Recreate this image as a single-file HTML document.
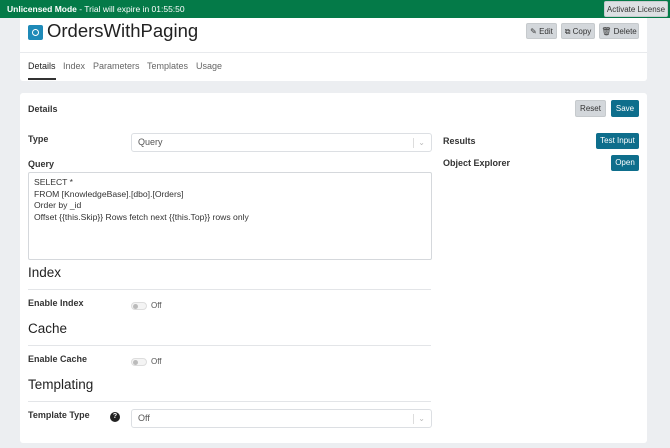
<html><head><style>
body{margin:0;width:670px;height:448px;background:#eceef1;font-family:"Liberation Sans",sans-serif;position:relative;overflow:hidden;color:#222}
div,span{position:absolute;box-sizing:border-box}
.b{font-weight:bold;font-size:9px;color:#333}
.btn{border-radius:2px;font-size:8px;text-align:center;line-height:16px;height:16px}
.g{background:#d3d7db;color:#333;border:1px solid #c6cacd}
.t{background:#0e6e8c;color:#fff}
.h{font-size:13.5px;color:#222}
.ln{height:1px;background:#e3e5e8;left:28px;width:403px}
.sel{border:1px solid #dcdfe3;border-radius:3px;background:#fff;height:19px;font-size:9px;color:#555;line-height:17px;padding-left:6px}
.sel:after{content:"";position:absolute;right:17px;top:4px;width:1px;height:10px;background:#ddd}
.tg{width:16px;height:8px;border:1px solid #ddd;border-radius:5px;background:#f4f4f4}
.tg:before{content:"";position:absolute;left:1px;top:1px;width:5px;height:5px;border-radius:50%;background:#bbb}
.tab{top:61px;font-size:9px;color:#666;white-space:nowrap}
</style></head><body>
<div style="left:0;top:0;width:670px;height:18px;background:#047a48;color:#fff;font-size:8.5px;line-height:18px;padding-left:7px"><b>Unlicensed Mode</b> - Trial will expire in 01:55:50</div>
<div class="btn g" style="left:604px;top:1px;width:64px;height:16px;background:#dde0e3">Activate License</div>
<div style="left:20px;top:18px;width:627px;height:63px;background:#fff;border-radius:0 0 3px 3px"></div>
<div style="left:20px;top:52px;width:627px;height:1px;background:#e8eaed"></div>
<div style="left:28px;top:25px;width:15px;height:15px;background:#1e8ab8;border-radius:2px"><span style="left:4px;top:4px;width:7px;height:7px;border:1.5px solid #fff;border-radius:50%"></span></div>
<div style="left:47px;top:20px;font-size:18.5px;color:#222;white-space:nowrap">OrdersWithPaging</div>
<div class="btn g" style="left:526px;top:23px;width:31px">✎ Edit</div>
<div class="btn g" style="left:561px;top:23px;width:34px">⧉ Copy</div>
<div class="btn g" style="left:599px;top:23px;width:40px">🗑 Delete</div>
<div class="tab" style="left:28px;color:#222">Details</div>
<div style="left:28px;top:78px;width:28px;height:2px;background:#333"></div>
<div class="tab" style="left:63px">Index</div>
<div class="tab" style="left:93px">Parameters</div>
<div class="tab" style="left:147px">Templates</div>
<div class="tab" style="left:196px">Usage</div>
<div style="left:20px;top:93px;width:627px;height:350px;background:#fff;border-radius:3px"></div>
<div class="b" style="left:28px;top:104px">Details</div>
<div class="btn g" style="left:575px;top:100px;width:31px;height:17px;line-height:15px">Reset</div>
<div class="btn t" style="left:611px;top:100px;width:28px;height:17px;line-height:17px">Save</div>
<div class="b" style="left:28px;top:134px">Type</div>
<div class="sel" style="left:131px;top:133px;width:301px">Query<span style="right:6px;top:0;color:#bbb;font-size:8px">⌄</span></div>
<div class="b" style="left:28px;top:159px">Query</div>
<div style="left:28px;top:172px;width:404px;height:88px;border:1px solid #d5d8dc;border-radius:2px;font-size:8.6px;line-height:11.7px;padding:4px 5px;color:#333;white-space:nowrap">SELECT *<br>FROM [KnowledgeBase].[dbo].[Orders]<br>Order by _id<br>Offset {{this.Skip}} Rows fetch next {{this.Top}} rows only</div>
<div class="b" style="left:443px;top:136px">Results</div>
<div class="btn t" style="left:596px;top:133px;width:43px">Test Input</div>
<div class="b" style="left:443px;top:158px">Object Explorer</div>
<div class="btn t" style="left:611px;top:155px;width:28px">Open</div>
<div class="h" style="left:28px;top:265px">Index</div>
<div class="ln" style="top:289px"></div>
<div class="b" style="left:28px;top:298px">Enable Index</div>
<div class="tg" style="left:131px;top:302px"></div><div style="left:151px;top:301px;font-size:8px;color:#555">Off</div>
<div class="h" style="left:28px;top:321px">Cache</div>
<div class="ln" style="top:345px"></div>
<div class="b" style="left:28px;top:354px">Enable Cache</div>
<div class="tg" style="left:131px;top:358px"></div><div style="left:151px;top:357px;font-size:8px;color:#555">Off</div>
<div class="h" style="left:28px;top:377px">Templating</div>
<div class="ln" style="top:401px"></div>
<div class="b" style="left:28px;top:410px">Template Type</div>
<div style="left:110px;top:412px;width:10px;height:10px;border-radius:50%;background:#222;color:#fff;font-size:7px;font-weight:bold;text-align:center;line-height:10px">?</div>
<div class="sel" style="left:131px;top:409px;width:301px">Off<span style="right:6px;top:0;color:#bbb;font-size:8px">⌄</span></div>
</body></html>
